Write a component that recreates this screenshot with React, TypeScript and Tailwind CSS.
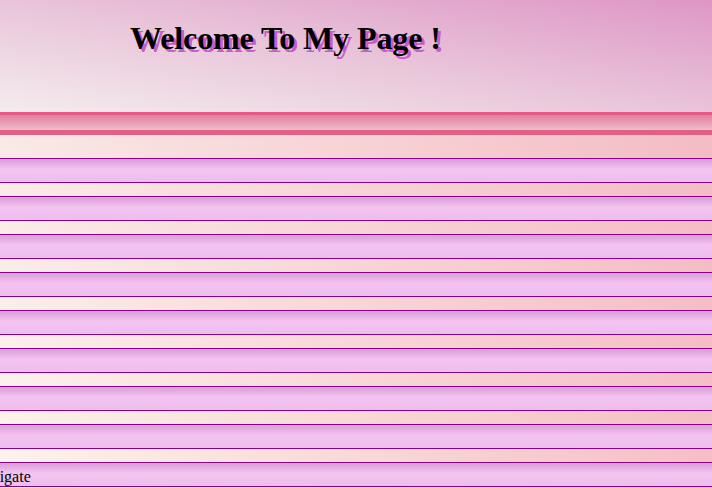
const rows = ["", "", "", "", "", "", "", "", "Navigate"];

const NavRow = ({label}: {label: string}) => {
    return (
        <div className="h-[25px] border-y border-[#8b008b] bg-[linear-gradient(to_bottom,#d89ed6,#f5c3f2_45%,#ebbfeb)] overflow-hidden">
            <span className="block pt-[2px] leading-[23px] text-[16px] indent-[-27px] text-black">{label}</span>
        </div>
    )
}

export default function App() {
    return (
        <div className="w-[712px] h-[488px] overflow-hidden font-['Liberation_Serif',serif] bg-[linear-gradient(to_right,#fcf4ec,#f5bfc4)]">
            <header className="h-[112px] pt-[20px] pl-[130px] bg-[linear-gradient(to_bottom_left,#de96c6,#e9c4d9_50%,#f4ecee)]">
                <h1 className="text-[32px] font-bold leading-[37px] tracking-[-0.1px] text-black [text-shadow:3px_3px_0_#c85ccb]">
                    Welcome To My Page !
                </h1>
            </header>
            <div className="h-[23px] border-t-[3px] border-b-[5px] border-t-[#e85a85] border-b-[#e06088] bg-[linear-gradient(to_bottom,#e27e9f,#f0bccb)]"></div>
            <div className="bg-[linear-gradient(to_bottom,rgba(236,170,200,0.15),rgba(236,170,200,0))] pt-[23px] flex flex-col gap-[13px]">
                {rows.map((r, i) => <NavRow key={i} label={r}/>)}
            </div>
        </div>
    )
}
